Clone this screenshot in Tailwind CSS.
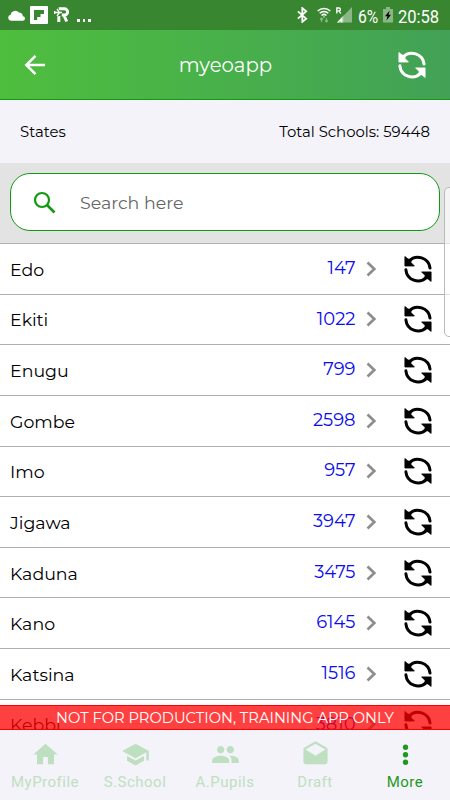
<!DOCTYPE html>
<html lang="en">
<head>
  <meta charset="UTF-8" />
  <meta name="viewport" content="width=device-width, initial-scale=1.0" />
  <title>myeoapp</title>
  <script src="https://cdn.jsdelivr.net/npm/@tailwindcss/browser@4"></script>
</head>
<body class="bg-white font-['Montserrat','Inter',sans-serif] text-black">
  <!-- Shared icons -->
  <svg class="hidden">
    <symbol id="sync" viewBox="0 0 28 28">
      <path d="M5 6.2A12.2 12.2 0 0 1 26 13M1.9 14.8A12.200 12.200 0 0 0 22.600 22.400" fill="none" stroke="currentColor" stroke-width="3" stroke-linecap="round" />
      <path d="M.9 1.500L4 4 7 4.600 7 7.600 10.400 11H.9zM27.100 26.400L24 23.900 21 23.300 21 20.300 17.600 16.900H27.100z" fill="currentColor" stroke="currentColor" stroke-width=".8" stroke-linejoin="round" />
    </symbol>
  </svg>

  <div class="relative flex flex-col w-[450px] h-[800px] overflow-hidden">
    <!-- Status bar -->
    <div class="flex items-center shrink-0 h-[30px] bg-[#388630] text-white font-['Roboto',sans-serif]">
      <svg class="ml-2 w-[17px] h-[11px]" viewBox="0.5 0.5 15.5 10" fill="currentColor"><path d="M3.300 10.300A2.800 2.800 0 0 1 2.800 4.800 4.400 4.400 0 0 1 10.500 2.800 3.600 3.600 0 0 1 14 6.100a2.100 2.100 0 0 1-.2 4.200z" /></svg>
      <svg class="ml-[5px] w-[18px] h-[18px]" viewBox="0 0 18 18"><rect width="18" height="18" rx="1" fill="#fff" /><path d="M4 4h10v4h-3.500v3H7.200v3H4z" fill="#388630" /></svg>
      <svg class="ml-[6px] w-[16px] h-[16px]" viewBox="0 0 16 16" fill="none" stroke="#fff"><path d="M4.700 1.800H10.500a2.900 2.900 0 0 1 0 6.200H7.800M4.800 9v6M10 8.500l2.700 6" stroke-width="3" /><path d="M0 5.500h8M3 2l2.500 3.500L3 9M1 4v3" stroke="#388630" stroke-width="2.600" /><path d="M0 5.500h8M3 2l2.500 3.500L3 9M.7 4v3" stroke-width="1.300" /></svg>
      <span class="ml-[7px] flex gap-[3px] mt-[11px]"><i class="size-[2.500px] bg-white"></i><i class="size-[2.500px] bg-white"></i><i class="size-[2.500px] bg-white"></i></span>
      <svg class="ml-auto w-[11px] h-[16px]" viewBox="0 0 12 17" fill="none" stroke="currentColor" stroke-width="2"><path d="M1 4.500l9 8-4.200 3.500V1L10 4.500l-9 8" /></svg>
      <svg class="ml-[9px] w-[14px] h-[16px]" viewBox="0 0 14 16" fill="none" stroke="#fff" stroke-width="1.500"><path d="M.7 4a9 9 0 0 1 12.600 0M2.700 6.300a6 6 0 0 1 8.600 0M4.600 8.500a3.500 3.500 0 0 1 4.800 0" /><path d="M6 9.500h2L7 11z" fill="#fff" stroke="none" /><path d="M4.500 15v-4M3 12.500l1.500-1.500L6 12.500M9.500 11v4M8 13.500L9.500 15l1.500-1.500" stroke="#8cb788" stroke-width="1.200" /></svg>
      <svg class="ml-[5px] w-[16px] h-[16px]" viewBox="0 0 16 16"><path d="M16 0v15.500H1z" fill="#8bb787" /><path d="M7.500 8.500v7H1z" fill="#fff" /><path d="M4 14v2M7 9v7" stroke="#388630" stroke-width=".6" /><path d="M.8 6.500V1h2.200a1.300 1.300 0 0 1 0 2.800H1M3 3.800l1.700 2.700" fill="none" stroke="#fff" stroke-width="1.300" /></svg>
      <span class="ml-[6px] w-[21px] text-[19px] leading-none tracking-[0] origin-left scale-x-[.82] mt-[2px]">6%</span>
      <svg class="ml-[4px] w-[10px] h-[16px]" viewBox="0 0 10 16"><path d="M3 0h4v2h3v13.500H0V2h3z" fill="#8bb787" /><path d="M6.800 3.500L2 9.200h2.500L3.500 13.500 8 7.700H5.500z" fill="#000" /></svg>
      <span class="ml-[5px] w-[52px] text-[19px] leading-none origin-left scale-x-[.87] mt-[2px]">20:58</span>
    </div>

    <!-- Header -->
    <header class="flex items-center shrink-0 h-[70px] px-6 border-b border-[#119911] bg-linear-to-r from-[#4ebe3d] via-[#48b04a] to-[#42a156] text-white">
      <svg class="w-[22px] h-[22px]" viewBox="0 0 22 22" fill="none" stroke="currentColor" stroke-width="2.500"><path d="M21 11H2.500M11.500 1.800L2.300 11l9.200 9.200" /></svg>
      <h1 class="flex-1 pl-[7px] pt-[3px] text-center text-[19.700px]">myeoapp</h1>
      <svg class="w-7 h-7"><use href="#sync" /></svg>
    </header>

    <div class="flex items-center justify-between shrink-0 h-[63px] pt-[2px] px-5 bg-[#f3f3f9] text-[14.900px]">
      <span>States</span>
      <span>Total Schools: 59448</span>
    </div>

    <!-- Search -->
    <div class="shrink-0 h-20 px-[10px] pt-[10px] bg-[#e3e3e3]">
      <div class="flex items-center h-[58px] rounded-[20px] border border-[#119911] bg-white pl-[22px]">
        <svg class="w-6 h-6 mt-[2px]" viewBox="0 0 24 24" fill="none" stroke="#119911"><circle cx="9" cy="9" r="7" stroke-width="2.200" /><path d="M14 14l7.500 7.500" stroke-width="2.600" /></svg>
        <span class="ml-[23px] pt-[3px] text-[17.400px] text-[#666]">Search here</span>
      </div>
    </div>

    <ul id="states" class="h-[487px] shrink-0 overflow-hidden"></ul>

    <!-- Edge panel handle -->
    <div class="absolute left-[444px] top-[187px] w-3 h-[150px] rounded-l-[5px] border border-[#bbb] bg-white/60"></div>

    <!-- Training banner -->
    <div class="absolute left-0 top-[705px] w-full h-[25px] flex items-center justify-center pt-[2px] border-y border-[#f00] bg-[#ff0000]/75 text-[14.700px] text-white">NOT FOR PRODUCTION, TRAINING APP ONLY</div>

    <!-- Tab bar -->
    <nav class="grid grid-cols-5 shrink-0 h-[70px] bg-[#f3f3f9] text-[#bfdfc1] font-['Roboto',sans-serif] text-[15px] leading-none tracking-[.5px]">
      <a class="flex flex-col items-center pt-[10px] gap-[6px]">
        <svg class="size-[29px]" viewBox="0 0 24 24" fill="currentColor"><path d="M10 20v-6h4v6h5v-8h3L12 3 2 12h3v8z" /></svg>MyProfile
      </a>
      <a class="flex flex-col items-center pt-[10px] gap-[6px]">
        <svg class="size-[29px]" viewBox="0 0 24 24" fill="currentColor"><path d="M5 13.180v4L12 21l7-3.820v-4L12 17l-7-3.820zM12 3L1 9l11 6 9-4.910V17h2V9L12 3z" /></svg>S.School
      </a>
      <a class="flex flex-col items-center pt-[10px] gap-[6px]">
        <svg class="size-[29px]" viewBox="0 0 24 24" fill="currentColor"><path d="M16 11c1.660 0 2.990-1.340 2.990-3S17.660 5 16 5c-1.660 0-3 1.340-3 3s1.340 3 3 3zm-8 0c1.660 0 2.990-1.340 2.990-3S9.660 5 8 5C6.340 5 5 6.340 5 8s1.340 3 3 3zm0 2c-2.330 0-7 1.170-7 3.500V19h14v-2.500c0-2.330-4.670-3.500-7-3.500zm8 0c-.29 0-.62.020-.97.050 1.160.840 1.970 1.970 1.970 3.450V19h6v-2.500c0-2.330-4.670-3.500-7-3.500z" /></svg>A.Pupils
      </a>
      <a class="flex flex-col items-center pt-[10px] gap-[6px]">
        <svg class="size-[29px]" viewBox="0 0 24 24" fill="currentColor"><path d="M21.990 8c0-.72-.37-1.350-.94-1.700L12 1 2.950 6.300C2.380 6.650 2 7.280 2 8v10c0 1.100.9 2 2 2h16c1.100 0 2-.9 2-2l-.01-10zM12 13L3.740 7.840 12 3l8.260 4.840L12 13z" /></svg>Draft
      </a>
      <a class="flex flex-col items-center pt-[10px] gap-[6px] text-[#1f981f]">
        <svg class="size-[29px]" viewBox="0 0 24 24" fill="currentColor"><circle cx="12" cy="6" r="2.200" /><circle cx="12" cy="12.200" r="2.200" /><circle cx="12" cy="18.400" r="2.200" /></svg>More
      </a>
    </nav>
  </div>

  <script>
    const states = [
      { name: "Edo", schools: 147 },
      { name: "Ekiti", schools: 1022 },
      { name: "Enugu", schools: 799 },
      { name: "Gombe", schools: 2598 },
      { name: "Imo", schools: 957 },
      { name: "Jigawa", schools: 3947 },
      { name: "Kaduna", schools: 3475 },
      { name: "Kano", schools: 6145 },
      { name: "Katsina", schools: 1516 },
      { name: "Kebbi", schools: 3810 },
    ];

    const list = document.getElementById("states");

    for (const state of states) {
      const row = document.createElement("li");
      row.className = "flex items-center h-[50.640px] pl-[10px] pr-[18.500px] border-t border-[#b0b0b0]";
      row.innerHTML = `
        <span class="flex-1 pt-[2px] text-[17.400px]">${state.name}</span>
        <span class="mb-[1px] text-[17.900px] text-[#0c0cee]">${state.schools}</span>
        <svg class="ml-[10px] w-[11px] h-4" viewBox="0 0 11 16" fill="none" stroke="#8e8e8e" stroke-width="2.700"><path d="M1.500 1.500L8.300 8l-6.800 6.500" /></svg>
        <svg class="ml-[27px] w-7 h-7"><use href="#sync" /></svg>
      `;
      list.appendChild(row);
    }
  </script>
</body>
</html>
